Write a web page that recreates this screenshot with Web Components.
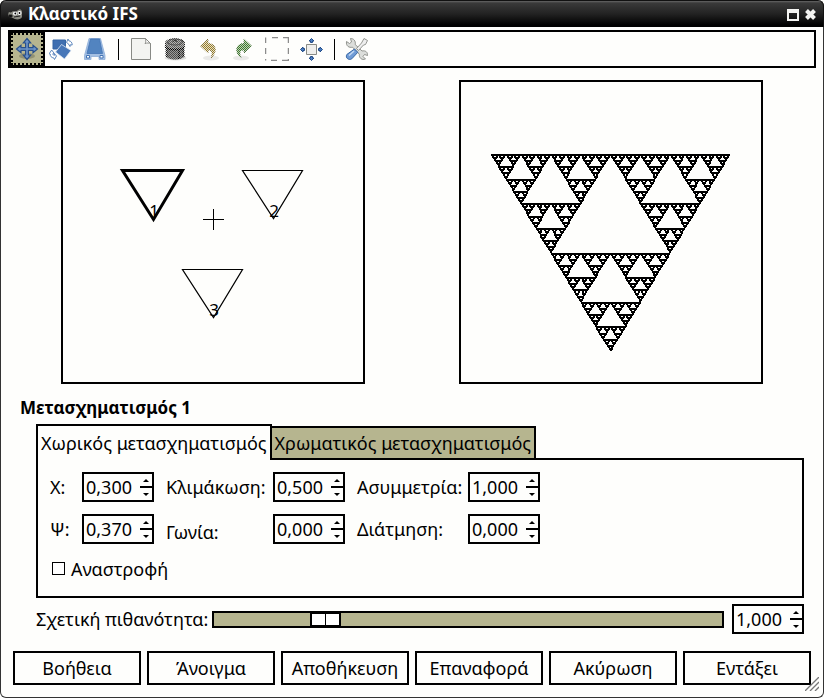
<!DOCTYPE html>
<html lang="el">
<head>
<meta charset="utf-8">
<title>Κλαστικό IFS</title>
<style>
  body { margin: 0; background: #fefefc; color: #000; font: 18px/24px "Noto Sans", "Open Sans", sans-serif; }
</style>
</head>
<body>
<ifs-window></ifs-window>

<script>
function define(name, html, setup) {
  const tpl = document.createElement('template');
  tpl.innerHTML = html;
  customElements.define(name, class extends HTMLElement {
    connectedCallback() {
      if (this.shadowRoot) return;
      this.attachShadow({ mode: 'open' }).appendChild(tpl.content.cloneNode(true));
      if (setup) setup(this, this.shadowRoot);
    }
  });
}

const stipple = '<defs><pattern id="p" width="2" height="2" patternUnits="userSpaceOnUse"><path fill="#fff" shape-rendering="crispEdges" d="M0 0h1v1H0zM1 1h1v1H1z"/></pattern><mask id="m" maskUnits="userSpaceOnUse" x="0" y="0" width="24" height="24"><path fill="url(#p)" d="M0 0h24v24H0z"/></mask></defs>';

const icons = {
  move: '<ellipse cx="12" cy="19" rx="8" ry="3" fill="#000" opacity=".2"/><path d="M12 1.500 15.700 6H13.400v4.600H18V8.300L22.500 12 18 15.700V13.400h-4.600V18h2.300L12 22.500 8.300 18h2.300v-4.600H6v2.300L1.500 12 6 8.300v2.300h4.600V6H8.300z" fill="#6d94c9" stroke="#28508c" stroke-width="1.200"/>',
  rotate: '<path d="M4 3h12.500v9H4z" fill="#3f6fb0" stroke="#3465a4"/><path d="m12.500 7.500 9.500 6-6.500 8.500-9-7z" fill="#4777b8" stroke="#dfe8f4" stroke-width=".8"/><path d="M17.500 5.500 19 2l.8 1.800c2.200.2 3.400 1.800 3.400 4.200l-2-.2-.2 1.700-1.700-2.800zM7.500 19 5.500 22.500l-.8-1.600C2.500 20.800 1 19 1.200 17l-1-.3L2.700 13l2.600 3.500-1.500.3c.1 1 .8 1.600 1.700 1.500V16.700z" fill="#fff" stroke="#5c86bd" stroke-width="1"/>',
  stretch: '<path d="M6 1.500h11.500l4.500 17v4h-6v-3H8v3H1.500v-4z" fill="#a3bfe2" stroke="#8dadd8" stroke-width=".8"/><path d="M7.500 2h9l3 14.500H4z" fill="#5284c0" stroke="#4475b5" stroke-width=".8"/><path d="M3.500 18.500h3v2.500h-3zM17 18.500h3v2.500h-3z" fill="#fff" stroke="#4475b5"/>',
  fresh: '<path d="M2.500 1.500h14l5 5v16h-19z" fill="#f3f4f1" stroke="#888a85" stroke-linejoin="round"/><path d="M16.500 1.500c.5 2 .5 3.500-.5 5 2-.7 4-.7 5.500 0z" fill="#fff" stroke="#888a85" stroke-linejoin="round"/>',
  clear: stipple + '<ellipse cx="12.500" cy="21" rx="11" ry="2.500" fill="#000" opacity=".12"/><path d="M3.500 8v11.500c1 4 16 4 17.500 0V8z" fill="#9a9a98"/><path d="M2.500 5.500C3 .500 21 .500 21.500 5.500V9c-1 4.500-18 4.500-19 0z" fill="#b5b5b3"/><g mask="url(#m)"><path d="M3.500 8v11.500c1 4 16 4 17.500 0V8z" fill="#4c4c4a"/><path d="M3.500 12v8M20.500 12v8M16 13v9" stroke="#111" stroke-width="2"/><path d="M2.500 5.500C3 .500 21 .500 21.500 5.500V9c-1 4.500-18 4.500-19 0z" fill="#5d5d5b" stroke="#222"/><path d="M2.500 9.500c1 4 18 4 19 0" fill="none" stroke="#000" stroke-width="2"/></g><ellipse cx="12" cy="5" rx="7.500" ry="3" fill="none" stroke="#444" stroke-width=".8"/><path d="M10 5c0-2 4-2 4 0" fill="none" stroke="#222"/>',
  undo: stipple + '<ellipse cx="14" cy="21" rx="8" ry="2.500" fill="#000" opacity=".08"/><g id="u"><path d="m3.500 9 7.500-7v4.500c8 0 10 8 3 14.500 2-5 1.500-8-3-8V16z" fill="#e2dfd0"/></g><path mask="url(#m)" d="m3.500 9 7.500-7v4.500c8 0 10 8 3 14.500 2-5 1.500-8-3-8V16z" fill="#9c7f22" stroke="#77662c" stroke-width=".8"/>',
  redo: stipple + '<ellipse cx="10" cy="21" rx="8" ry="2.500" fill="#000" opacity=".08"/><path d="m20.500 9-7.500-7v4.500C5 6.500 3 14.500 10 21c-2-5-1.500-8 3-8V16z" fill="#bfd0b8"/><path mask="url(#m)" d="m20.500 9-7.500-7v4.500C5 6.500 3 14.500 10 21c-2-5-1.500-8 3-8V16z" fill="#3e7b2d" stroke="#3f6734" stroke-width=".8"/>',
  select: '<path d="M.5 6V.5M7 .5h6m5 0h5.500V6M.5 11v6m23-6v6M.5 22v1.500M6 23.500h6m5 0h6.500V22" fill="none" stroke="#8c8c8c" stroke-width="1.500"/>',
  recenter: '<path d="M7.500 7.500h10v10h-10z" fill="#eeeeec" stroke="#888a85"/><path d="m12.500 1.500 2.500 2.500h-1.500v1.500h-2V4H10zM12.500 23.500 15 21h-1.500v-1.500h-2V21H10zM1.500 12.500 4 10v1.500h1.500v2H4V15zM23.500 12.500 21 10v1.500h-1.500v2H21V15z" fill="#4c7fc2" stroke="#204a87" stroke-width="1"/>',
  options: '<path d="M5.500 1.500 6.500 5 4.500 6.500 1.500 4.500C.8 9 4 11 7.500 10.200l6.800 7c-.3 3.800 2.500 6.300 6.200 4.800l-2.500-2.500 1.500-2 3 1c.3-3.500-2-5.200-5.500-4.500L10.200 7.500C11 4 8.500 1.300 5.500 1.500z" fill="#dcdedb" stroke="#888a85" stroke-width=".9"/><path d="m19 1.500 3.500 2-2 4-2 .5-5 5.500-2-2 5-5.500z" fill="#eee" stroke="#888a85" stroke-width=".9"/><path d="m9.500 12 3.300 3.300-6 6.500c-2.800 2-6.800-.8-5-4.300z" fill="#6f9bd6" stroke="#3465a4"/><path d="m4 18.500 5-4.500" stroke="#c4d9f2" stroke-width="1.600"/>'
};

define('tool-button', `
<style>
  :host { display: block; }
  button { display: grid; place-items: center; width: 34px; height: 34px; padding: 0; border: 0; background: none; }
  svg { display: block; width: 24px; height: 24px; }
  :host([active]) button { background: #b6b58f; border: 2px dotted #000; outline: 2px solid #000; width: 32px; height: 32px; margin: 1px; }
</style>
<button type="button"><svg viewBox="0 0 24 24" aria-hidden="true"></svg></button>`, (host, root) => {
  root.querySelector('svg').innerHTML = icons[host.getAttribute('icon')];
  const button = root.querySelector('button');
  button.setAttribute('aria-label', host.getAttribute('name'));
  if (host.hasAttribute('active')) button.setAttribute('aria-pressed', 'true');
});

define('tool-strip', `
<style>
  :host { display: flex; align-items: center; margin: 0 7px; height: 34px; border: 2px solid #000; }
  ::slotted(hr) { width: 1px; height: 21px; margin: 0 5px 0 6px; border: 0; background: #000; }
</style>
<slot></slot>`);

define('title-bar', `
<style>
  :host { display: flex; align-items: center; height: 27px; padding: 0 6px 0 7px; box-sizing: border-box;
    background: linear-gradient(#666 0, #3a3a3a 2px, #222 13px, #000 24px); border: 1px solid #111; border-bottom: 0;
    border-radius: 6px 6px 0 0; color: #fff; }
  h1 { flex: 1; margin: 0 0 0 5px; font-size: 17px; line-height: 24px; font-weight: bold; }
  svg { display: block; }
  button { padding: 0; border: 0; background: none; margin-left: 4px; }
</style>
<svg width="15" height="13" viewBox="0 0 15 13" aria-hidden="true"><path d="M1 4c2 1 3 0 4-1l2 1 5-3 2 2v6c-1 3-7 3-9 1L2 9C0 9 0 5 1 4z" fill="#8a8b82"/><circle cx="7" cy="5.500" r="2" fill="#fff"/><circle cx="11.500" cy="5" r="2" fill="#fff"/><circle cx="7.300" cy="5.500" r=".9"/><circle cx="11.500" cy="5" r=".9"/><path d="M1 7h3v2H1zM6 9l6-1" stroke="#222"/></svg>
<h1><slot></slot></h1>
<button type="button" aria-label="Μεγιστοποίηση"><svg width="13" height="13"><path fill="#f4f4f2" fill-rule="evenodd" d="M0 1h12v12H0zM2 5v6h8V5z"/></svg></button>
<button type="button" aria-label="Κλείσιμο"><svg width="13" height="13"><path d="m2.500 2.500 8 8m0-8-8 8" fill="none" stroke="#f4f4f2" stroke-width="4"/></svg></button>`);

define('transform-view', `
<style>
  :host { display: block; width: 300px; height: 300px; border: 2px solid #000; }
  svg { display: block; width: 100%; height: 100%; }
  text { font-size: 17px; text-anchor: middle; }
</style>
<svg viewBox="0 0 300 300" role="img" aria-label="Τρίγωνα μετασχηματισμών">
  <g fill="none" stroke="#000">
    <path d="M59.500 88.500h60l-29 49z" stroke-width="3"/>
    <path d="M179.500 88.500h60l-29 48zM119.500 187.500h60l-29 48z" stroke-width="1.200"/>
    <path d="M140 137.500h21M150.500 127v21"/>
  </g>
  <text x="91" y="135">1</text><text x="211" y="135">2</text><text x="151" y="234">3</text>
</svg>`);

define('fractal-view', `
<style>
  :host { display: block; width: 300px; height: 300px; border: 2px solid #000; }
  svg { display: block; width: 100%; height: 100%; }
</style>
<svg viewBox="0 0 300 300" role="img" aria-label="Προεπισκόπηση κλαστικού"><path shape-rendering="crispEdges"/></svg>`, (host, root) => {
  let d = '';
  const dots = (x, y, w, h, level) => {
    if (level === 0) { d += 'M' + Math.round(x) + ' ' + Math.round(y) + 'h2v2h-2z'; return; }
    dots(x, y, w / 2, h / 2, level - 1);
    dots(x + w / 2, y, w / 2, h / 2, level - 1);
    dots(x + w / 4, y + h / 2, w / 2, h / 2, level - 1);
  };
  dots(30, 72, 239, 197, 7);
  root.querySelector('path').setAttribute('d', d);
});

define('spin-field', `
<style>
  :host { display: flex; align-items: center; }
  label { width: var(--label-width, auto); white-space: nowrap; }
  :host([low]) { align-items: end; }
  .box { display: grid; grid-template-columns: 1fr 12px; width: 72px; height: 30px; box-sizing: border-box; border: 2px solid #000; }
  input { min-width: 0; width: 100%; box-sizing: border-box; padding: 0 0 0 2px; border: 0; background: none; color: inherit; font: inherit; outline: 0; }
  .steps { display: grid; grid-template-rows: 1fr 1fr; gap: 2px; background: linear-gradient(#000, #000) center / 100% 2px no-repeat; }
  button { display: grid; place-items: center; padding: 0; border: 0; background: none; }
  svg { display: block; width: 6px; height: 3px; }
</style>
<label for="value"></label>
<span class="box">
  <input id="value" type="text" inputmode="decimal" role="spinbutton">
  <span class="steps">
    <button type="button" tabindex="-1" aria-label="Αύξηση"><svg viewBox="0 0 6 3"><path d="M0 3h6L3 0z"/></svg></button>
    <button type="button" tabindex="-1" aria-label="Μείωση"><svg viewBox="0 0 6 3"><path d="M0 0h6L3 3z"/></svg></button>
  </span>
</span>`, (host, root) => {
  const input = root.querySelector('input');
  input.value = host.getAttribute('value');
  const label = root.querySelector('label');
  if (host.hasAttribute('label')) label.textContent = host.getAttribute('label');
  else { label.remove(); input.setAttribute('aria-label', host.getAttribute('name')); }
  const step = by => {
    const n = parseFloat(input.value.replace(',', '.')) + by;
    input.value = n.toFixed(3).replace('.', ',');
  };
  const [up, down] = root.querySelectorAll('button');
  up.onclick = () => step(0.001);
  down.onclick = () => step(-0.001);
});

define('check-field', `
<style>
  :host { display: block; }
  label { display: inline-flex; align-items: center; gap: 6px; }
  input { appearance: none; box-sizing: border-box; width: 13px; height: 13px; margin: 0; border: 1px solid #000; background: #fff; }
  input:checked { background: #000; box-shadow: inset 0 0 0 2px #fff; }
</style>
<label><input type="checkbox"><slot></slot></label>`);

define('tab-panel', `
<style>
  :host { display: block; }
  [role=tablist] { display: flex; align-items: flex-end; }
  button { box-sizing: border-box; height: 34px; padding: 0 3px; border: 2px solid #000; border-left-width: 0; background: #b6b58f; color: inherit; font: inherit; white-space: nowrap; }
  button[aria-selected=true] { position: relative; height: 36px; border-left-width: 2px; border-bottom: 0; background: #fefefc; }
  .page { margin-top: -2px; border: 2px solid #000; padding: 12px; min-height: 112px; }
</style>
<div role="tablist">
  <button type="button" role="tab" id="a" aria-selected="true">Χωρικός μετασχηματισμός</button>
  <button type="button" role="tab" id="b" aria-selected="false">Χρωματικός μετασχηματισμός</button>
</div>
<div class="page" role="tabpanel" aria-labelledby="a"><slot></slot></div>`);

define('probability-row', `
<style>
  :host { display: flex; align-items: center; gap: 4px; }
  input { appearance: none; flex: 1; min-width: 0; height: 17px; box-sizing: border-box; margin: 0 4px 0 0; border: 2px solid #000; background: #b6b58f; }
  input::-webkit-slider-thumb { appearance: none; box-sizing: border-box; width: 31px; height: 13px; border: solid #000; border-width: 1px 2px;
    background: linear-gradient(#000, #000) center / 1px 100% no-repeat #fff; }
</style>
<label for="p">Σχετική πιθανότητα:</label>
<input id="p" type="range" min="0" max="5" step="0.001" value="1">
<spin-field name="Σχετική πιθανότητα" value="1,000"></spin-field>`);

define('dialog-button', `
<style>
  :host { display: block; flex: 1; min-width: 0; }
  button { display: block; width: 100%; height: 34px; padding: 0; border: 2px solid #000; background: none; color: inherit; font: inherit; }
</style>
<button type="button"><slot></slot></button>`);

define('ifs-window', `
<style>
  :host { display: block; }
  .frame { position: relative; display: flex; flex-direction: column; box-sizing: border-box; min-height: 100vh; border: 1px solid #333; border-top: 0; border-radius: 6px; }
  title-bar { margin: 0 -1px 3px; }
  .views { display: grid; grid-template-columns: 1fr 1fr; justify-items: center; padding: 12px 13px; }
  h2 { margin: 0 19px; font-size: 17px; line-height: 24px; font-weight: bold; }
  tab-panel { margin: 4px 19px 0 35px; }
  .fields { display: grid; grid-template-columns: repeat(3, max-content); gap: 12px; }
  .x { --label-width: 32px; } .s { --label-width: 107px; } .a { --label-width: 111px; }
  check-field { margin: 12px 0 0 2px; }
  probability-row { margin: 6px 19px 0 35px; }
  footer { display: flex; gap: 6px; padding: 17px 12px 12px; }
  .grip { position: absolute; right: 4px; bottom: 6px; }
</style>
<main class="frame">
  <title-bar>Κλαστικό IFS</title-bar>
  <tool-strip>
    <tool-button icon="move" name="Μετακίνηση" active></tool-button>
    <tool-button icon="rotate" name="Περιστροφή"></tool-button>
    <tool-button icon="stretch" name="Παραμόρφωση"></tool-button>
    <hr>
    <tool-button icon="fresh" name="Νέο"></tool-button>
    <tool-button icon="clear" name="Διαγραφή"></tool-button>
    <tool-button icon="undo" name="Αναίρεση"></tool-button>
    <tool-button icon="redo" name="Επανάληψη"></tool-button>
    <tool-button icon="select" name="Επιλογή όλων"></tool-button>
    <tool-button icon="recenter" name="Επανακεντράρισμα"></tool-button>
    <hr>
    <tool-button icon="options" name="Επιλογές"></tool-button>
  </tool-strip>
  <div class="views"><transform-view></transform-view><fractal-view></fractal-view></div>
  <h2>Μετασχηματισμός 1</h2>
  <tab-panel>
    <div class="fields">
      <spin-field class="x" label="Χ:" value="0,300"></spin-field>
      <spin-field class="s" label="Κλιμάκωση:" value="0,500"></spin-field>
      <spin-field class="a" label="Ασυμμετρία:" value="1,000"></spin-field>
      <spin-field class="x" label="Ψ:" value="0,370"></spin-field>
      <spin-field class="s" label="Γωνία:" value="0,000" low></spin-field>
      <spin-field class="a" label="Διάτμηση:" value="0,000"></spin-field>
    </div>
    <check-field>Αναστροφή</check-field>
  </tab-panel>
  <probability-row></probability-row>
  <footer>
    <dialog-button>Βοήθεια</dialog-button>
    <dialog-button>Άνοιγμα</dialog-button>
    <dialog-button>Αποθήκευση</dialog-button>
    <dialog-button>Επαναφορά</dialog-button>
    <dialog-button>Ακύρωση</dialog-button>
    <dialog-button>Εντάξει</dialog-button>
  </footer>
  <svg class="grip" width="14" height="14" aria-hidden="true"><path d="M0 14 14 0M5 14l9-9M10 14l4-4" stroke="#777" stroke-width="1.300"/></svg>
</main>`);
</script>
</body>
</html>
